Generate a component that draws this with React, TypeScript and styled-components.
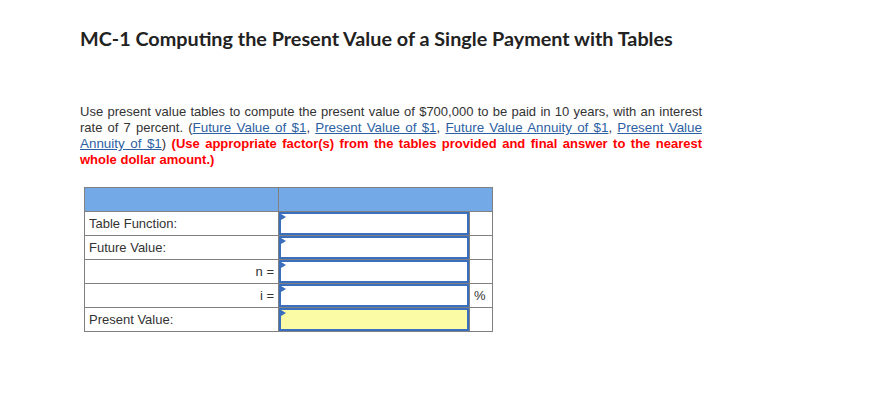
import React from "react";
import styled, { createGlobalStyle } from "styled-components";

const Global = createGlobalStyle`
  html, body { margin: 0; padding: 0; background: #fff; }
  body { font-family: "Liberation Sans", Arial, sans-serif; }
`;

const Page = styled.div`
  padding: 26px 0 0 80px;
  width: 622px;
`;

const Title = styled.h1`
  margin: 0;
  font-family: "Lato", "Liberation Sans", sans-serif;
  font-weight: 700;
  font-size: 19.8px;
  line-height: 24px;
  color: #222;
  white-space: nowrap;
`;

const Question = styled.p`
  margin: 54px 0 0 0;
  font-size: 13px;
  line-height: 16px;
  color: #333;
  text-align: justify;
`;

const Link = styled.a`
  color: #2d5fa3;
  font-size: 13.4px;
  text-decoration: underline;
`;

const Warn = styled.strong`
  color: #f00;
  font-weight: 700;
`;

const Grid = styled.table`
  margin: 19px 0 0 4px;
  border-collapse: collapse;
  font-size: 13px;
  color: #333;
`;

const HeadCell = styled.th`
  background: #72a9e6;
  border: 1px solid #808080;
  height: 23px;
  padding: 0;
`;

const Cell = styled.td<{ $align?: string; $w?: number }>`
  border: 1px solid #808080;
  height: 23px;
  padding: 0 4px;
  text-align: ${(p) => p.$align || "left"};
  width: ${(p) => (p.$w ? `${p.$w}px` : "auto")};
  box-sizing: border-box;
  white-space: nowrap;
`;

const InputCell = styled.td`
  border: 1px solid #808080;
  padding: 0;
  width: 191px;
  height: 23px;
  box-sizing: border-box;
`;

const Field = styled.div<{ $yellow?: boolean }>`
  position: relative;
  height: 23px;
  box-sizing: border-box;
  border: 2px solid #3a6ebf;
  background: ${(p) => (p.$yellow ? "#fbfba5" : "#fff")};
`;

const Marker = styled.span`
  position: absolute;
  left: 0;
  top: 0;
  width: 0;
  height: 0;
  border-top: 3px solid transparent;
  border-bottom: 3px solid transparent;
  border-left: 5px solid #3a6ebf;
`;

const rows: { label: string; align?: string; unit?: string; yellow?: boolean }[] = [
  { label: "Table Function:" },
  { label: "Future Value:" },
  { label: "n =", align: "right" },
  { label: "i =", align: "right", unit: "%" },
  { label: "Present Value:", yellow: true },
];

export default function App() {
  return (
    <>
      <Global />
      <Page>
        <Title>MC-1 Computing the Present Value of a Single Payment with Tables</Title>
        <Question>
          Use present value tables to compute the present value of $700,000 to be paid in 10 years, with an interest
          rate of 7 percent. (<Link>Future Value of $1</Link>, <Link>Present Value of $1</Link>,{" "}
          <Link>Future Value Annuity of $1</Link>, <Link>Present Value Annuity of $1</Link>){" "}
          <Warn>(Use appropriate factor(s) from the tables provided and final answer to the nearest whole dollar amount.)</Warn>
        </Question>
        <Grid>
          <thead>
            <tr>
              <HeadCell style={{ width: 193 }} />
              <HeadCell colSpan={2} />
            </tr>
          </thead>
          <tbody>
            {rows.map((r) => (
              <tr key={r.label}>
                <Cell $align={r.align} $w={193}>{r.label}</Cell>
                <InputCell>
                  <Field $yellow={r.yellow}>
                    <Marker />
                  </Field>
                </InputCell>
                <Cell $w={23}>{r.unit || ""}</Cell>
              </tr>
            ))}
          </tbody>
        </Grid>
      </Page>
    </>
  );
}
